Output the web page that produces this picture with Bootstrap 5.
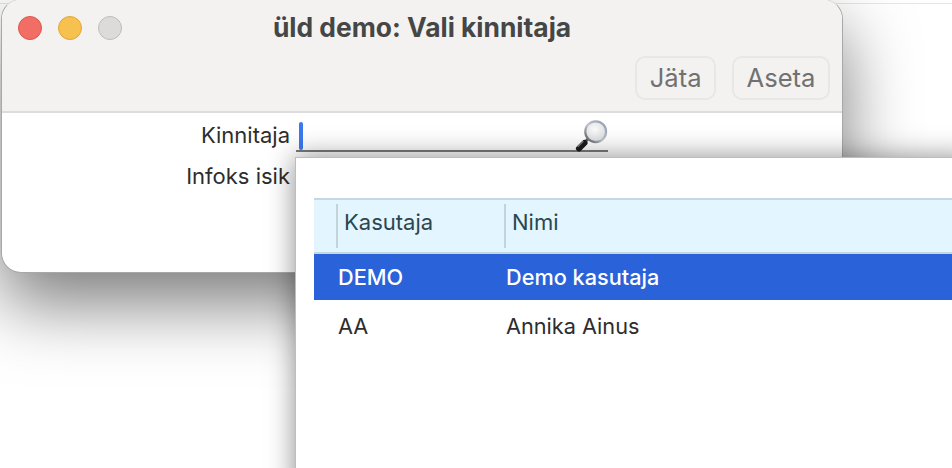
<!DOCTYPE html>
<html lang="et">
<head>
<meta charset="utf-8">
<title>üld demo: Vali kinnitaja</title>
<link rel="stylesheet" href="https://cdn.jsdelivr.net/npm/bootstrap@5.3.0/dist/css/bootstrap.min.css">
<style>
html,body{margin:0;background:#fff;overflow:hidden}
body{font-family:Inter,"Noto Sans",sans-serif;color:#2b2b2b}
.desk{position:relative;width:952px;height:468px;overflow:hidden;background:#fff}
.deskline{height:1px;margin-top:3px;background:#e6e6e6}
.appwin{position:absolute;left:1px;top:-1px;width:842px;height:274px;background:#fff;border:1px solid #a8a8a8;border-top-color:#d8d8d8;border-radius:20px;box-shadow:0 30px 70px rgba(0,0,0,.52);overflow:hidden}
.titlebar{height:113px;background:#f3f2f0;border-bottom:2px solid #dcdcdc;padding:0 12px 12px 16px}
.titlerow{height:56px;position:relative}
.tl{width:24px;height:24px;border-radius:50%;border:1px solid}
.tl-r{background:#f26d63;border-color:#d9574e}
.tl-y{background:#f6c14f;border-color:#dfa63c}
.tl-g{background:#dcdbd9;border-color:#bdbcba}
.wintitle{font-size:26.4px;font-weight:700;color:#464646;line-height:55px;padding-right:4px}
.winbtn{height:44px;background:#f3f2f0;border:2px solid #e8e7e5;border-radius:10px;color:#717171;font-size:25.6px;line-height:1;padding:0 12.5px}
.winbtn:disabled,.winbtn.disabled{opacity:1;color:#717171;background:#f3f2f0;border-color:#e8e7e5}
.formarea{padding-top:7px}
.frow{height:41px}
.flabel{width:288px;text-align:right;font-size:22px;line-height:30px;color:#2d2d2d}
.field{position:relative;width:312px;margin-left:6px;height:32px;border-bottom:2px solid #7b7b7b}
.caret-b{position:absolute;left:3px;top:2px;width:4px;height:28px;border-radius:2px;background:#3b79ee}
.lens{position:absolute;right:-3px;top:-3px}
.popup{position:absolute;left:295px;top:157px;width:680px;height:340px;background:#fff;border:1px solid #bdbdbd;box-shadow:0 0 26px rgba(0,0,0,.45);padding:40px 0 0 18px}
.picktable{width:100%;font-size:21.7px}
.headrow{height:56px;background:#e3f5fe;border-top:2px solid #c4d8e2;border-bottom:2px solid #c4d8e2;color:#2b4650;font-size:22px}
.hcell{height:44px;line-height:36px;border-left:2px solid #c3d3da;padding-left:6px}
.c1{width:22px;flex:none}
.c2{width:168px;flex:none}
.datarow{height:46px;line-height:46px;color:#2d2d2d;padding-left:24px}
.datarow.picked{background:#2a62d9;color:#fff;font-weight:500}
.datarow.plain{height:54px;line-height:52px}
</style>
</head>
<body>
<div class="desk">
  <div class="deskline"></div>

  <div class="appwin">
    <div class="titlebar">
      <div class="titlerow d-flex align-items-center gap-3">
        <span class="tl tl-r"></span><span class="tl tl-y"></span><span class="tl tl-g"></span>
        <div class="wintitle position-absolute top-0 start-0 w-100 text-center">üld demo: Vali kinnitaja</div>
      </div>
      <div class="d-flex justify-content-end gap-3">
        <button type="button" class="btn winbtn" disabled>Jäta</button>
        <button type="button" class="btn winbtn" disabled>Aseta</button>
      </div>
    </div>
    <div class="formarea">
      <div class="frow d-flex">
        <div class="flabel">Kinnitaja</div>
        <div class="field">
          <span class="caret-b"></span>
          <svg class="lens" width="36" height="36" viewBox="0 0 36 36">
            <defs>
              <radialGradient id="glass" cx=".45" cy=".4" r=".7"><stop offset="0" stop-color="#fbfbfb"/><stop offset="1" stop-color="#d6d8da"/></radialGradient>
              <linearGradient id="ring" x1="1" y1="0" x2="0" y2="1"><stop offset="0" stop-color="#8f9aae"/><stop offset=".55" stop-color="#c0c5cc"/><stop offset="1" stop-color="#4f555e"/></linearGradient>
            </defs>
            <line x1="10" y1="25" x2="14" y2="21" stroke="#5a5a5a" stroke-width="3"/>
            <line x1="4" y1="31.5" x2="9.5" y2="26" stroke="#1b1b1b" stroke-width="6" stroke-linecap="round"/>
            <line x1="3" y1="29.5" x2="8" y2="24.5" stroke="#808080" stroke-width="1.2" stroke-linecap="round"/>
            <circle cx="20.7" cy="14.7" r="10.4" fill="url(#glass)" stroke="url(#ring)" stroke-width="2.2"/>
          </svg>
        </div>
      </div>
      <div class="frow d-flex">
        <div class="flabel">Infoks isik</div>
      </div>
    </div>
  </div>

  <div class="popup">
    <div class="picktable">
      <div class="headrow d-flex align-items-center">
        <div class="c1"></div>
        <div class="c2 hcell">Kasutaja</div>
        <div class="flex-grow-1 hcell">Nimi</div>
      </div>
      <div class="datarow picked d-flex">
        <div class="c2">DEMO</div>
        <div>Demo kasutaja</div>
      </div>
      <div class="datarow plain d-flex">
        <div class="c2">AA</div>
        <div>Annika Ainus</div>
      </div>
    </div>
  </div>
</div>
</body>
</html>
